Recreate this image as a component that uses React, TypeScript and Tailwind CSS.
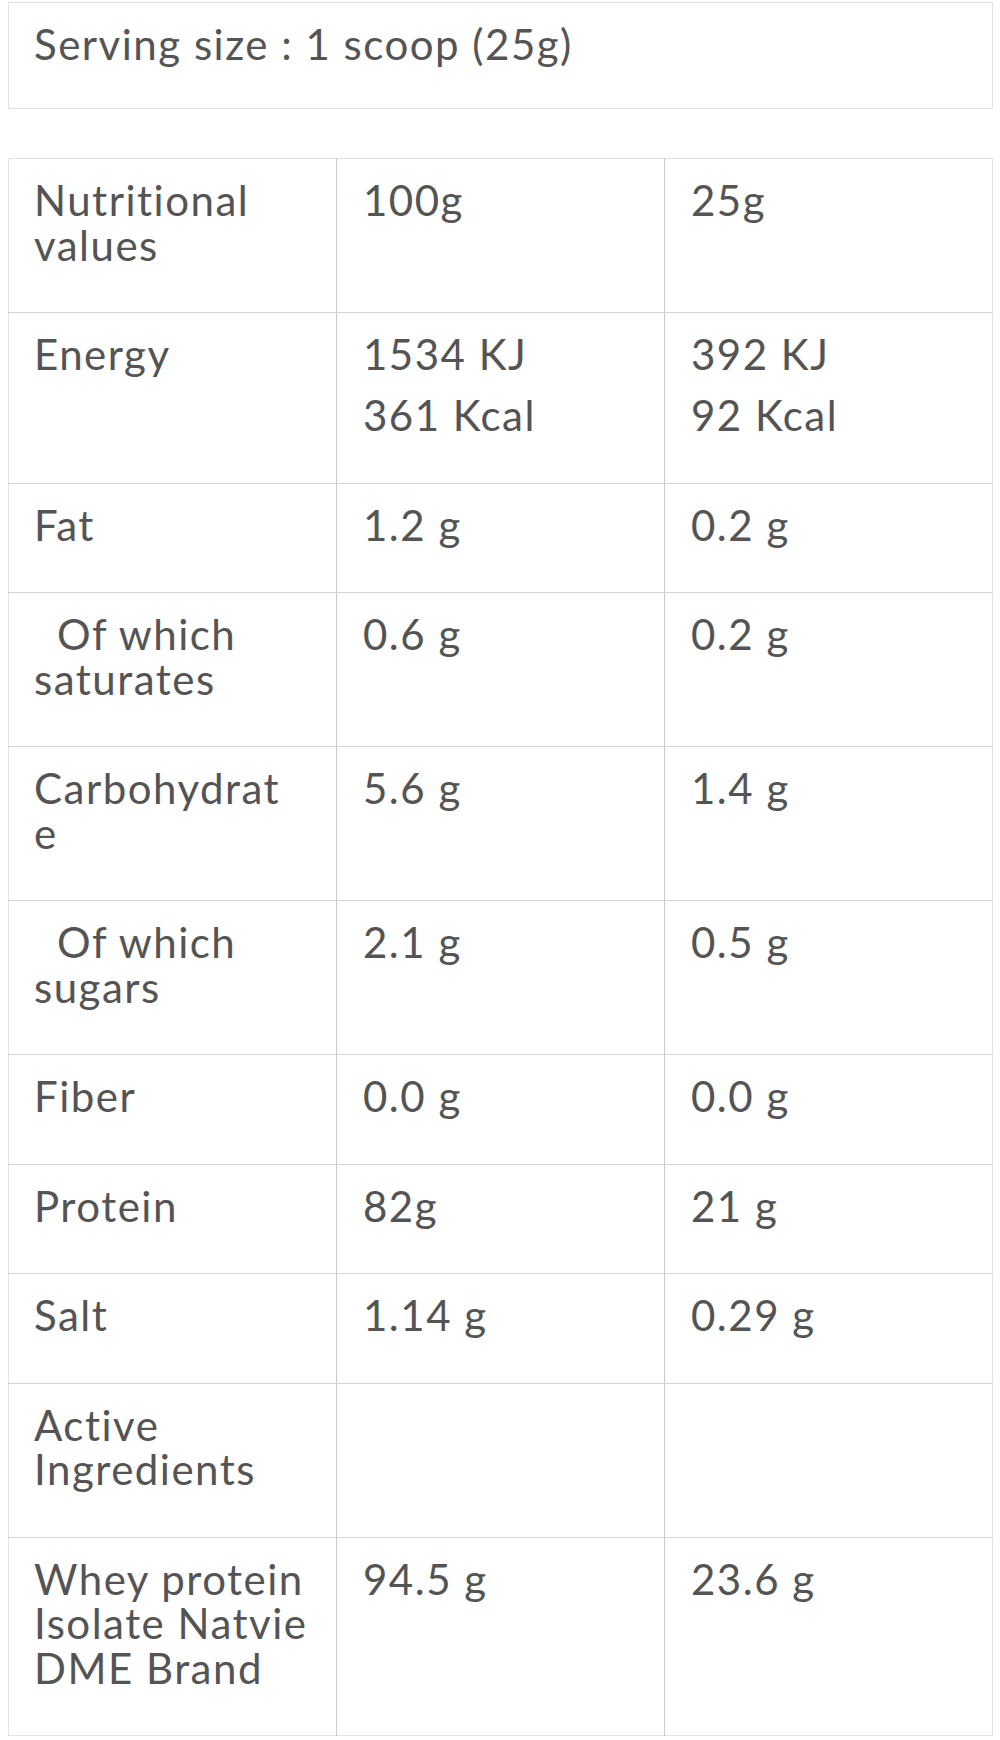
const rows: { label: string[]; per100: string[]; perServing: string[]; indent?: boolean }[] = [
  { label: ["Nutritional", "values"], per100: ["100g"], perServing: ["25g"] },
  { label: ["Energy"], per100: ["1534 KJ", "361 Kcal"], perServing: ["392 KJ", "92 Kcal"] },
  { label: ["Fat"], per100: ["1.2 g"], perServing: ["0.2 g"] },
  { label: ["Of which", "saturates"], per100: ["0.6 g"], perServing: ["0.2 g"], indent: true },
  { label: ["Carbohydrat", "e"], per100: ["5.6 g"], perServing: ["1.4 g"] },
  { label: ["Of which", "sugars"], per100: ["2.1 g"], perServing: ["0.5 g"], indent: true },
  { label: ["Fiber"], per100: ["0.0 g"], perServing: ["0.0 g"] },
  { label: ["Protein"], per100: ["82g"], perServing: ["21 g"] },
  { label: ["Salt"], per100: ["1.14 g"], perServing: ["0.29 g"] },
  { label: ["Active", "Ingredients"], per100: [], perServing: [] },
  { label: ["Whey protein", "Isolate Natvie", "DME Brand"], per100: ["94.5 g"], perServing: ["23.6 g"] },
];

// values stacked as separate lines get a bit of extra space between them
const Values = ({ items }: { items: string[] }) => (
  <>
    {items.map((v, i) => (
      <div key={i} className={i > 0 ? "mt-[16.5px]" : ""}>
        {v}
      </div>
    ))}
  </>
);

const App = () => {
  return (
    <div
      className="w-[1000px] min-h-[1740px] bg-white pl-[8px] pr-[7px] pt-[2px] text-[42px] leading-[44.5px] tracking-[1.5px] text-[#545454]"
      style={{ fontFamily: "Lato, 'Noto Sans', sans-serif" }}
    >
      <div className="h-[107px] border border-[#e3e3e3] pl-[25px] pt-[19px] whitespace-nowrap">
        Serving size : 1 scoop (25g)
      </div>

      <table className="mt-[49px] w-full table-fixed border-collapse border border-[#e3e3e3]">
        <tbody>
          {rows.map((row, idx) => (
            <tr key={idx} className="border-b border-[#d4d4d4] last:border-b-[#e3e3e3]">
              <td className="border-r border-[#cacaca] pl-[25px] pr-[4px] pt-[19px] pb-[45px] align-top whitespace-nowrap">
                {row.label.map((line, i) => (
                  <div key={i} className={row.indent && i === 0 ? "pl-[23px]" : ""}>
                    {line}
                  </div>
                ))}
              </td>
              <td className="border-r border-[#cacaca] pl-[26px] pr-[4px] pt-[19px] pb-[45px] align-top whitespace-nowrap">
                <Values items={row.per100} />
              </td>
              <td className="pl-[26px] pr-[4px] pt-[19px] pb-[45px] align-top whitespace-nowrap">
                <Values items={row.perServing} />
              </td>
            </tr>
          ))}
        </tbody>
      </table>
    </div>
  );
};

export default App;
